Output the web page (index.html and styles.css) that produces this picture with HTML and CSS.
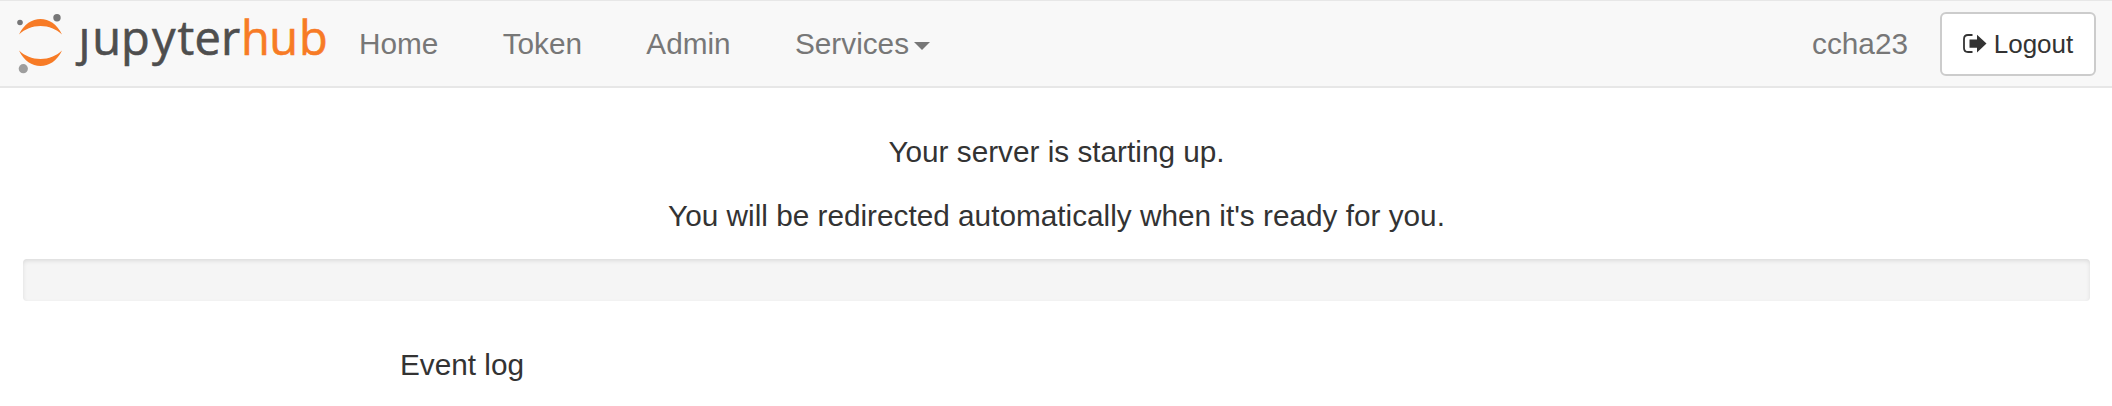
FILE: index.html
```html
<!DOCTYPE html>
<html lang="en">
<head>
<meta charset="utf-8">
<title>JupyterHub</title>
<link rel="stylesheet" href="styles.css">
</head>
<body>
<nav class="navbar">
  <a class="brand" href="#" aria-label="JupyterHub">
    <svg class="logo" width="332" height="80" viewBox="0 0 332 80">
      <defs><clipPath id="word"><path d="M92 0H332V80H70V28.500H92Z"/></clipPath></defs>
      <path fill="#f77b26" d="M19 34.5C24 24 32 19 40.500 19S57 24 62 34.500C56 29 49 26 40.500 26S25 29 19 34.500Z"/>
      <path fill="#f77b26" d="M19 50.500C24 61 32 66 40.500 66S57 61 62 50.500C56 56 49 59 40.500 59S25 56 19 50.500Z"/>
      <circle cx="20" cy="22.500" r="2.800" fill="#767677"/>
      <circle cx="57" cy="17.800" r="3.700" fill="#767677"/>
      <circle cx="23.300" cy="68.700" r="4.600" fill="#9e9e9e"/>
      <g class="wordmark" clip-path="url(#word)">
        <text class="gray" y="54.500" x="78.500 92.200 121 152 177.500 194.500 221">jupyter</text>
        <text class="orange" y="54.500" x="241 269.300 299">hub</text>
      </g>
    </svg>
  </a>
  <ul class="links">
    <li><a href="#">Home</a></li>
    <li><a href="#">Token</a></li>
    <li><a href="#">Admin</a></li>
    <li><a href="#">Services<span class="caret"></span></a></li>
  </ul>
  <div class="account">
    <span class="user">ccha23</span>
    <a class="logout" href="#">
      <svg class="icon" width="24" height="20" viewBox="0 0 24 20">
        <path fill="none" stroke="#333" stroke-width="1.800" d="M9.500 1H5Q1 1 1 5V14Q1 18 5 18H9.500"/>
        <path fill="#333" d="M6.500 5.500H14V.8L23.500 9.500L14 18.400V13.800H6.500Z"/>
      </svg>
      <span>Logout</span>
    </a>
  </div>
</nav>
<main class="content">
  <p>Your server is starting up.</p>
  <p>You will be redirected automatically when it's ready for you.</p>
  <div class="progress"></div>
  <div class="log">Event log</div>
</main>
</body>
</html>
```
FILE: styles.css
```css
* { box-sizing: border-box; }
body {
  margin: 0;
  background: #fff;
  color: #333;
  font: 29.75px/42px "Liberation Sans", Arial, sans-serif;
}
a { color: inherit; text-decoration: none; }
.navbar {
  display: flex;
  height: 88px;
  padding-right: 16px;
  background: #f8f8f8;
  border-top: 1px solid #e7e7e7;
  border-bottom: 2px solid #e7e7e7;
  color: #777;
}
.brand { width: 359px; margin-top: -1px; }
.logo { display: block; }
.wordmark { font: 47px "Open Sans", sans-serif; stroke-width: .6px; }
.gray { fill: #4e4e4e; stroke: #4e4e4e; }
.orange { fill: #f77b26; stroke: #f77b26; }
.links {
  display: flex;
  gap: 64.3px;
  margin: 0;
  padding: 22px 0 0;
  list-style: none;
}
.caret {
  display: inline-block;
  margin-left: 4.5px;
  vertical-align: middle;
  border-top: 8px solid;
  border-left: 8px solid transparent;
  border-right: 8px solid transparent;
}
.account { display: flex; margin-left: auto; }
.user { padding: 22px 32px 0 0; }
.logout {
  display: flex;
  align-items: center;
  justify-content: center;
  gap: 7px;
  width: 156px;
  height: 64px;
  margin-top: 11px;
  border: 2px solid #ccc;
  border-radius: 6px;
  background: #fff;
  color: #333;
  font-size: 26px;
}
.content { padding: 43px 22px 0 23px; }
.content p { margin: 0 0 22px; text-align: center; }
.progress {
  height: 42px;
  border-radius: 4px;
  background: #f5f5f5;
  box-shadow: inset 0 2px 4px rgba(0, 0, 0, .1);
}
.log { margin: 43px 0 0 377px; }
```
